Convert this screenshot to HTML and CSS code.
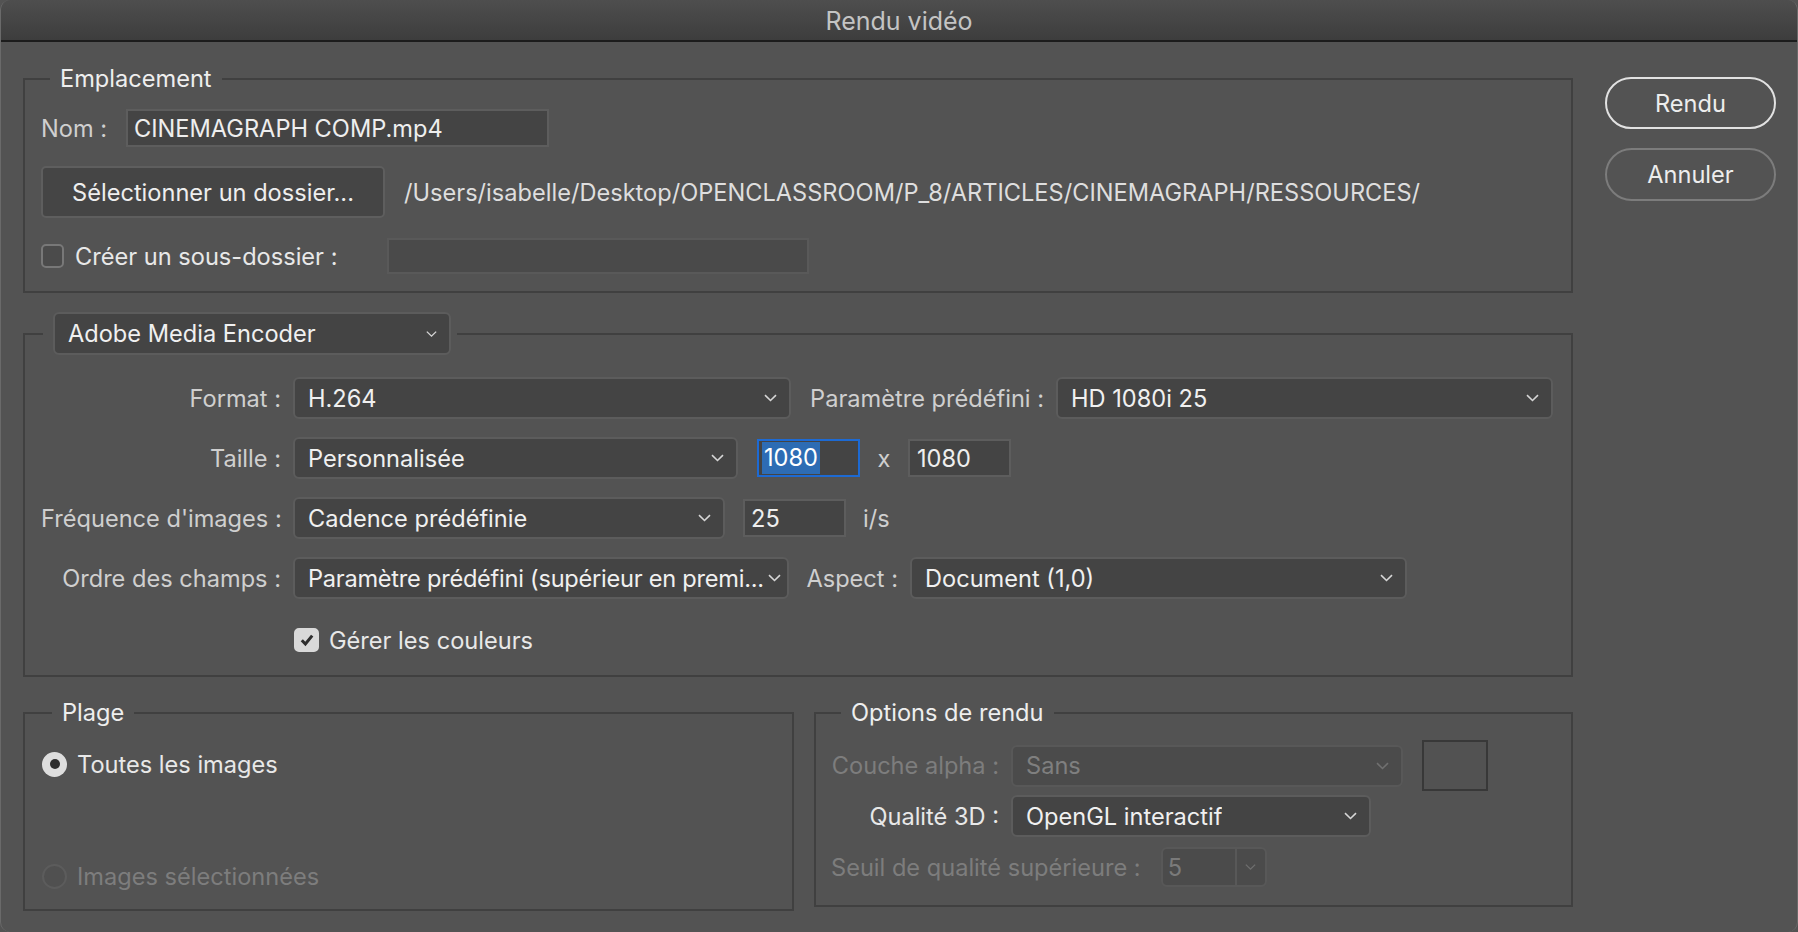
FILE: index.html
```html
<!DOCTYPE html>
<html lang="fr">
<head>
<meta charset="utf-8">
<title>Rendu vidéo</title>
<link rel="stylesheet" href="styles.css">
</head>
<body>
<div class="window">
  <div class="titlebar">Rendu vidéo</div>
  <div class="main">
    <div class="content">
      <fieldset class="group g-emplacement">
        <legend class="legend-text lg-emp">Emplacement</legend>
        <div class="row row-nom">
          <span class="label">Nom :</span>
          <div class="input input-nom">CINEMAGRAPH COMP.mp4</div>
        </div>
        <div class="row row-folder">
          <div class="button btn-folder">Sélectionner un dossier...</div>
          <span class="path">/Users/isabelle/Desktop/OPENCLASSROOM/P_8/ARTICLES/CINEMAGRAPH/RESSOURCES/</span>
        </div>
        <div class="row row-sub">
          <span class="checkbox"></span>
          <span class="label-strong sub-label">Créer un sous-dossier :</span>
          <div class="input input-sub"></div>
        </div>
      </fieldset>

      <fieldset class="group g-encoder">
        <legend class="lg-enc">
          <div class="select select-enc"><span>Adobe Media Encoder</span><svg class="chev" viewBox="0 0 13 8"><path d="M1 1.2 L6.5 6.5 L12 1.2"/></svg></div>
        </legend>
        <div class="enc-grid">
          <span class="label">Format :</span>
          <div class="ctrls">
            <div class="select w-format"><span>H.264</span><svg class="chev" viewBox="0 0 13 8"><path d="M1 1.2 L6.5 6.5 L12 1.2"/></svg></div>
            <span class="label side-label w-param">Paramètre prédéfini :</span>
            <div class="select w-preset"><span>HD 1080i 25</span><svg class="chev" viewBox="0 0 13 8"><path d="M1 1.2 L6.5 6.5 L12 1.2"/></svg></div>
          </div>

          <span class="label">Taille :</span>
          <div class="ctrls">
            <div class="select w-taille"><span>Personnalisée</span><svg class="chev" viewBox="0 0 13 8"><path d="M1 1.2 L6.5 6.5 L12 1.2"/></svg></div>
            <div class="input num focused"><span class="sel">1080</span></div>
            <span class="label x-label">x</span>
            <div class="input num num-b">1080</div>
          </div>

          <span class="label">Fréquence d'images :</span>
          <div class="ctrls">
            <div class="select w-freq"><span>Cadence prédéfinie</span><svg class="chev" viewBox="0 0 13 8"><path d="M1 1.2 L6.5 6.5 L12 1.2"/></svg></div>
            <div class="input num num-fps">25</div>
            <span class="label ips">i/s</span>
          </div>

          <span class="label">Ordre des champs :</span>
          <div class="ctrls">
            <div class="select w-ordre"><span class="ellip">Paramètre prédéfini (supérieur en premi...</span><svg class="chev" viewBox="0 0 13 8"><path d="M1 1.2 L6.5 6.5 L12 1.2"/></svg></div>
            <span class="label side-label w-aspect">Aspect :</span>
            <div class="select w-aspect-sel"><span>Document (1,0)</span><svg class="chev" viewBox="0 0 13 8"><path d="M1 1.2 L6.5 6.5 L12 1.2"/></svg></div>
          </div>

          <span></span>
          <div class="ctrls row-colors">
            <span class="checkbox checked"><svg viewBox="0 0 20 20"><path d="M4.8 10.2 L8.4 14 L15.2 5.6"/></svg></span>
            <span class="label-strong colors-label">Gérer les couleurs</span>
          </div>
        </div>
      </fieldset>

      <div class="bottom">
        <fieldset class="group g-plage">
          <legend class="legend-text lg-plage">Plage</legend>
          <div class="radio-row">
            <span class="radio on"></span>
            <span class="label-strong">Toutes les images</span>
          </div>
          <div class="radio-row disabled">
            <span class="radio off"></span>
            <span class="label-dis">Images sélectionnées</span>
          </div>
        </fieldset>

        <fieldset class="group g-options">
          <legend class="legend-text lg-opt">Options de rendu</legend>
          <div class="opt-grid">
            <span class="label-dis opt-label">Couche alpha :</span>
            <div class="opt-ctrls">
              <div class="select dis w-alpha"><span>Sans</span><svg class="chev" viewBox="0 0 13 8"><path d="M1 1.2 L6.5 6.5 L12 1.2"/></svg></div>
              <div class="swatch"></div>
            </div>
            <span class="label-strong opt-label">Qualité 3D :</span>
            <div class="opt-ctrls">
              <div class="select w-q3d"><span>OpenGL interactif</span><svg class="chev" viewBox="0 0 13 8"><path d="M1 1.2 L6.5 6.5 L12 1.2"/></svg></div>
            </div>
          </div>
          <div class="seuil-row">
            <span class="label-dis">Seuil de qualité supérieure :</span>
            <div class="combo"><span class="combo-val">5</span><span class="combo-btn"><svg class="chev" viewBox="0 0 13 8"><path d="M1 1.2 L6.5 6.5 L12 1.2"/></svg></span></div>
          </div>
        </fieldset>
      </div>
    </div>

    <div class="actions">
      <div class="pill primary">Rendu</div>
      <div class="pill">Annuler</div>
    </div>
  </div>
</div>
</body>
</html>
```

FILE: styles.css
```css
* { box-sizing: border-box; }
html, body {
  margin: 0;
  padding: 0;
  background: #535353;
}
body {
  font-family: Inter, "Noto Sans", "Liberation Sans", sans-serif;
  font-size: 23.6px;
  color: #e6e6e6;
}
.window {
  width: 1798px;
  height: 932px;
  background: #535353;
  border-radius: 10px;
  overflow: hidden;
  border-left: 1px solid #6a6a6a;
  border-right: 1px solid #6a6a6a;
}
.titlebar {
  height: 42px;
  background: linear-gradient(#4e4e4e, #3d3d3d);
  border-bottom: 2px solid #1c1c1c;
  color: #c4c4c4;
  font-size: 25px;
  display: flex;
  align-items: center;
  justify-content: center;
  padding-top: 1px;
}
.main {
  display: flex;
  padding: 23px 21px 0 22px;
  gap: 32px;
}
.content {
  width: 1550px;
  display: flex;
  flex-direction: column;
}
.group {
  margin: 0;
  border: 2px solid #404040;
  min-width: 0;
}
.legend-text {
  color: #eeeeee;
  line-height: 28px;
  padding: 0 10px;
}

/* Emplacement */
.g-emplacement { padding: 16px 16px 17px 16px; }
.lg-emp { margin-left: 9px; }
.row { display: flex; align-items: center; }
.label { color: #cfcfcf; white-space: nowrap; }
.label-strong { color: #e8e8e8; white-space: nowrap; }
.label-dis { color: #7d7d7d; white-space: nowrap; }
.row-nom { height: 38px; }
.row-nom .label { width: 85px; }
.input {
  background: #444444;
  border: 2px solid #5d5d5d;
  height: 38px;
  display: flex;
  align-items: center;
  padding: 0 6px;
  color: #eeeeee;
  white-space: nowrap;
}
.input-nom { width: 423px; }
.row-folder { margin-top: 19px; height: 52px; gap: 19px; }
.button {
  background: #454545;
  border: 2px solid #5e5e5e;
  border-radius: 5px;
  height: 52px;
  width: 344px;
  display: flex;
  align-items: center;
  justify-content: center;
  color: #eeeeee;
}
.path { color: #dedede; white-space: nowrap; }
.row-sub { margin-top: 20px; height: 36px; }
.checkbox {
  width: 23px;
  height: 24px;
  border: 2px solid #787878;
  border-radius: 5px;
  background: #4b4b4b;
  flex: none;
  display: flex;
  align-items: center;
  justify-content: center;
}
.sub-label { margin-left: 11px; width: 312px; }
.input-sub { width: 422px; height: 36px; background: #4a4a4a; border-color: #595959; }

/* Encoder */
.g-encoder { margin-top: 19px; padding: 22px 16px 22px 16px; }
.lg-enc { margin-left: 2px; padding: 0 6px 0 10px; }
.select {
  background: #444444;
  border: 2px solid #5c5c5c;
  border-radius: 6px;
  height: 42px;
  display: flex;
  align-items: center;
  justify-content: space-between;
  padding: 0 12px 0 13px;
  color: #f0f0f0;
  white-space: nowrap;
  flex: none;
  gap: 4px;
}
.select span { overflow: hidden; }
.chev {
  width: 13px;
  height: 8px;
  flex: none;
  fill: none;
  stroke: #d6d6d6;
  stroke-width: 1.6;
}
.select-enc { width: 398px; height: 43px; padding-left: 13px; }
.select-enc .chev { width: 11px; }
.enc-grid {
  display: grid;
  grid-template-columns: 240px 1fr;
  column-gap: 12px;
  row-gap: 18px;
  align-items: center;
}
.enc-grid > .label { text-align: right; }
.ctrls { display: flex; align-items: center; height: 42px; }
.w-format { width: 498px; }
.side-label { text-align: right; }
.w-param { width: 265px; padding-right: 12px; }
.w-preset { width: 497px; }
.w-taille { width: 445px; }
.num { width: 103px; }
.focused { margin-left: 19px; border-color: #1d6ad3; padding-left: 3px; }
.sel { background: #2d6cb4; color: #ffffff; padding: 0 2px; line-height: 32px; }
.x-label { width: 48px; text-align: center; }
.num-b { padding-left: 7px; }
.w-freq { width: 432px; }
.num-fps { margin-left: 18px; padding-left: 6px; }
.ips { margin-left: 17px; }
.w-ordre { width: 496px; padding-right: 6px; }
.w-ordre .ellip { letter-spacing: -0.25px; flex: 1; }
.w-aspect { width: 121px; padding-right: 12px; }
.w-aspect-sel { width: 497px; }
.row-colors { height: 26px; margin-top: 10px; }
.checkbox.checked {
  background: #d9d9d9;
  border-color: #d9d9d9;
  width: 25px;
  height: 24px;
  margin-left: 1px;
}
.checkbox svg {
  width: 20px;
  height: 20px;
  fill: none;
  stroke: #2e2e2e;
  stroke-width: 3;
}
.colors-label { margin-left: 10px; }

/* Bottom */
.bottom {
  display: flex;
  gap: 20px;
  margin-top: 22px;
  align-items: flex-start;
}
.g-plage { width: 771px; padding: 23px 16px 19px 17px; }
.lg-plage { margin-left: 10px; }
.radio-row { display: flex; align-items: center; height: 28px; gap: 10px; }
.radio-row + .radio-row { margin-top: 84px; }
.radio {
  width: 25px;
  height: 25px;
  border-radius: 50%;
  flex: none;
  display: flex;
  align-items: center;
  justify-content: center;
}
.radio.on { background: #dedede; }
.radio.on::after {
  content: "";
  width: 10px;
  height: 10px;
  border-radius: 50%;
  background: #2f2f2f;
}
.radio.off { border: 2px solid #5c5c5c; background: #505050; }

.g-options { width: 759px; padding: 13px 15px 18px 15px; }
.lg-opt { margin-left: 10px; }
.opt-grid {
  display: grid;
  grid-template-columns: 168px 1fr;
  column-gap: 12px;
  row-gap: 4px;
  align-items: center;
}
.opt-label { text-align: right; }
.opt-ctrls { display: flex; align-items: center; gap: 19px; }
.w-alpha { width: 392px; }
.select.dis { background: #4b4b4b; border-color: #585858; color: #7f7f7f; }
.select.dis .chev { stroke: #707070; }
.swatch { width: 66px; height: 51px; border: 2px solid #383838; background: #525252; }
.w-q3d { width: 360px; }
.seuil-row { display: flex; align-items: center; margin-top: 10px; height: 40px; gap: 20px; }
.combo {
  width: 106px;
  height: 40px;
  border: 2px solid #585858;
  border-radius: 6px;
  background: #4b4b4b;
  display: flex;
}
.combo-val {
  width: 74px;
  border-right: 2px solid #585858;
  color: #7a7a7a;
  display: flex;
  align-items: center;
  padding-left: 5px;
}
.combo-btn { flex: 1; display: flex; align-items: center; justify-content: center; }
.combo-btn .chev { stroke: #6e6e6e; width: 11px; }

/* Actions */
.actions {
  display: flex;
  flex-direction: column;
  gap: 19px;
  padding-top: 12px;
}
.pill {
  width: 171px;
  height: 53px;
  border-radius: 27px;
  border: 2px solid #7c7c7c;
  display: flex;
  align-items: center;
  justify-content: center;
  color: #ededed;
}
.pill.primary { border-color: #e2e2e2; height: 52px; }
```
